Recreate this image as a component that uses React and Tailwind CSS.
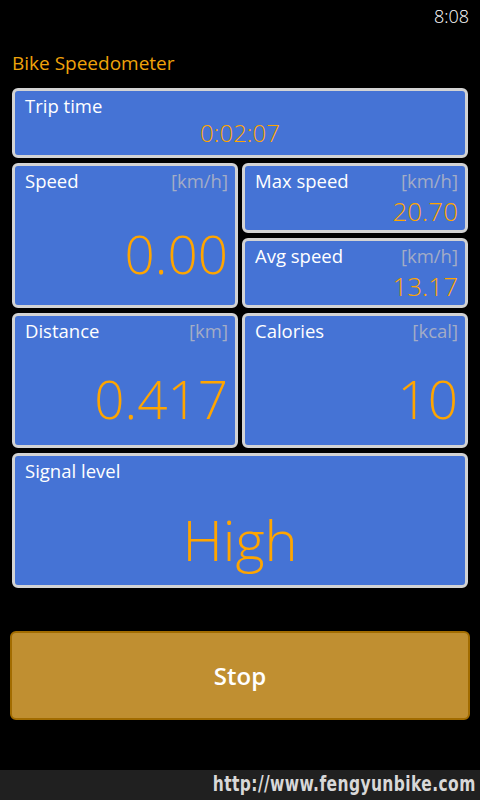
const font = "font-['Segoe_UI','Open_Sans',sans-serif]";

function Card({ label, unit, className, children }) {
  return (
    <div className={`border-[3px] border-[#d3d3d3] rounded-[6px] bg-[#4573d5] flex flex-col ${className}`}>
      <div className="flex justify-between items-start pl-[10px] pr-[7px] pt-[2px] text-[18.5px] leading-[26px]">
        <span className="text-white">{label}</span>
        {unit && <span className="text-[#a3acc6]">{unit}</span>}
      </div>
      {children}
    </div>
  );
}

export default function App() {
  return (
    <div className={`w-[480px] h-[800px] bg-black flex flex-col ${font}`}>
      <div className="h-[32px] flex justify-end items-center pr-[11px] text-white text-[18px] font-light">8:08</div>
      <div className="pl-[12px] pt-[18px] h-[56px] text-[19px] leading-[26px] text-[#f0a30a]">Bike Speedometer</div>

      <div className="px-[12px] flex flex-col gap-[5px]">
        <Card label="Trip time" className="h-[70px]">
          <div className="text-center text-[#ffa500] text-[24px] leading-[28px] font-light">0:02:07</div>
        </Card>

        <div className="grid grid-cols-2 gap-[4px]">
          <Card label="Speed" unit="[km/h]" className="h-[145px]">
            <div className="mt-auto pb-[24px] pr-[7px] text-right text-[#ffa500] text-[53px] leading-[54px] font-light">0.00</div>
          </Card>
          <div className="flex flex-col gap-[5px]">
            <Card label="Max speed" unit="[km/h]" className="h-[70px]">
              <div className="mt-auto pb-[6px] pr-[7px] text-right text-[#ffa500] text-[26px] leading-[26px] font-light">20.70</div>
            </Card>
            <Card label="Avg speed" unit="[km/h]" className="h-[70px]">
              <div className="mt-auto pb-[6px] pr-[7px] text-right text-[#ffa500] text-[26px] leading-[26px] font-light">13.17</div>
            </Card>
          </div>
        </div>

        <div className="grid grid-cols-2 gap-[4px]">
          <Card label="Distance" unit="[km]" className="h-[135px]">
            <div className="mt-auto pb-[19px] pr-[7px] text-right text-[#ffa500] text-[53px] leading-[54px] font-light">0.417</div>
          </Card>
          <Card label="Calories" unit="[kcal]" className="h-[135px]">
            <div className="mt-auto pb-[19px] pr-[7px] text-right text-[#ffa500] text-[53px] leading-[54px] font-light">10</div>
          </Card>
        </div>

        <Card label="Signal level" className="h-[135px]">
          <div className="mt-auto pb-[18px] text-center text-[#ffa500] text-[56px] leading-[56px] font-light">High</div>
        </Card>
      </div>

      <div className="px-[10px] mt-[43px]">
        <button className="w-full h-[89px] rounded-[6px] border-2 border-[#a26c00] bg-[#c08f31] text-white text-[24px] font-semibold">
          Stop
        </button>
      </div>

      <div className="mt-auto h-[30px] bg-[#202020] flex justify-end items-center pr-[4px] overflow-hidden">
        <span className="font-['DejaVu_Sans_Condensed',sans-serif] font-bold text-[21px] text-[#d8d8d8] tracking-[0.5px] origin-right scale-x-[0.82] whitespace-nowrap">http://www.fengyunbike.com</span>
      </div>
    </div>
  );
}
